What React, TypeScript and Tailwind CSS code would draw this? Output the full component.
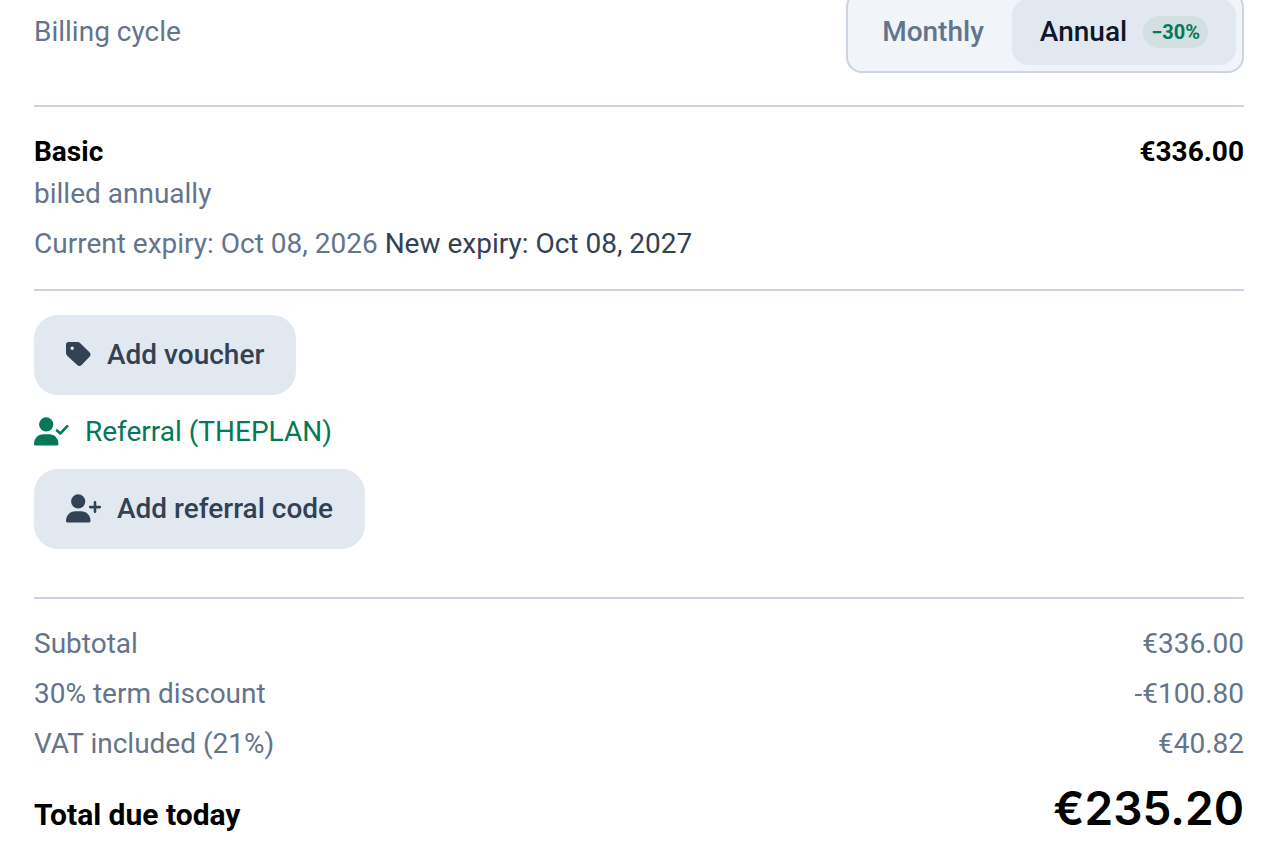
import type { ReactNode } from 'react';

interface SummaryLine {
  label: string;
  amount: string;
}

const LINES: SummaryLine[] = [
  { label: 'Subtotal', amount: '€336.00' },
  { label: '30% term discount', amount: '-€100.80' },
  { label: 'VAT included (21%)', amount: '€40.82' },
];

function TagIcon() {
  return (
    <svg viewBox="0 0 25 28" className="h-7 w-[25px] shrink-0" fill="currentColor" aria-hidden="true">
      <path
        fillRule="evenodd"
        d="M0 3.800A2.800 2.800 0 0 1 2.800 1H11.500a4 4 0 0 1 2.800 1.150L23.500 11.300a3.200 3.200 0 0 1 0 4.500L15.700 24a3.200 3.200 0 0 1-4.500 0L1.200 14.700A4 4 0 0 1 0 11.900ZM6.200 5.500a1.750 1.750 0 1 0 0 3.500 1.750 1.750 0 0 0 0-3.500Z"
      />
    </svg>
  );
}

function UserIcon({ children }: { children: ReactNode }) {
  return (
    <svg viewBox="0 0 35 28" className="h-7 w-[35px] shrink-0 overflow-visible" fill="currentColor" aria-hidden="true">
      <circle cx="12.2" cy="6.400" r="7.1" />
      <path d="M0 25.900C0 20.400 4 16.200 9.500 16.200H15C20.500 16.200 24.500 20.400 24.500 25.900A1.700 1.700 0 0 1 22.800 27.600H1.700A1.700 1.700 0 0 1 0 25.900Z" />
      <g fill="none" stroke="currentColor" strokeWidth="2.6" strokeLinecap="round" strokeLinejoin="round">
        {children}
      </g>
    </svg>
  );
}

function ActionButton({ icon, children }: { icon: ReactNode; children: ReactNode }) {
  return (
    <button type="button" className="flex h-20 items-center gap-4 rounded-3xl bg-[#e2e8f0] px-8 font-medium text-[#334155]">
      {icon}
      <span>{children}</span>
    </button>
  );
}

export default function App() {
  return (
    <main className="overflow-hidden bg-white px-[34px] pr-8 pb-5 font-['Roboto','Liberation_Sans',sans-serif] text-[28px] leading-[42px] text-[#64748b]">
      <section className="-mt-[9px] flex items-center justify-between border-b-2 border-[#cbd5e1] pb-8">
        <span id="billing-cycle">Billing cycle</span>
        <div
          role="group"
          aria-labelledby="billing-cycle"
          className="flex rounded-2xl border-2 border-[#cbd5e1] bg-[#f1f5f9] p-1.5 font-medium"
        >
          <button type="button" aria-pressed="false" className="rounded-2xl px-7 py-3">
            Monthly
          </button>
          <button type="button" aria-pressed="true" className="flex items-center gap-4 rounded-2xl bg-[#e2e8f0] px-7 py-3 text-[#0f172a]">
            Annual
            <span className="rounded-full bg-[#d2e0e2] px-2 text-xl leading-8 font-bold text-[#047857]">−30%</span>
          </button>
        </div>
      </section>

      <section className="border-b-2 border-[#cbd5e1] pt-6 pb-6">
        <div className="flex justify-between font-bold text-black">
          <h2>Basic</h2>
          <span>€336.00</span>
        </div>
        <p>billed annually</p>
        <p className="mt-2">
          Current expiry: Oct 08, 2026 <span className="text-[#334155]">New expiry: Oct 08, 2027</span>
        </p>
      </section>

      <section className="flex flex-col items-start gap-4 border-b-2 border-[#cbd5e1] pt-6 pb-12">
        <ActionButton icon={<TagIcon />}>Add voucher</ActionButton>
        <div className="flex items-center gap-4 text-[#047857]">
          <UserIcon>
            <path d="M23 12.500L26.300 15.500L33.300 8.200" />
          </UserIcon>
          <span>Referral (THEPLAN)</span>
        </div>
        <ActionButton
          icon={
            <UserIcon>
              <path d="M29 7.400V16.800M24.200 12.100H33.800" />
            </UserIcon>
          }
        >
          Add referral code
        </ActionButton>
      </section>

      <section className="pt-6">
        <dl className="flex flex-col gap-2">
          {LINES.map((line) => (
            <div key={line.label} className="flex justify-between">
              <dt>{line.label}</dt>
              <dd>{line.amount}</dd>
            </div>
          ))}
          <div className="mt-2 flex items-baseline justify-between text-black">
            <dt className="text-[30px] font-bold">Total due today</dt>
            <dd className="font-['Inter','Liberation_Sans',sans-serif] text-[46px] leading-[54px] font-semibold">€235.20</dd>
          </div>
        </dl>
      </section>
    </main>
  );
}
